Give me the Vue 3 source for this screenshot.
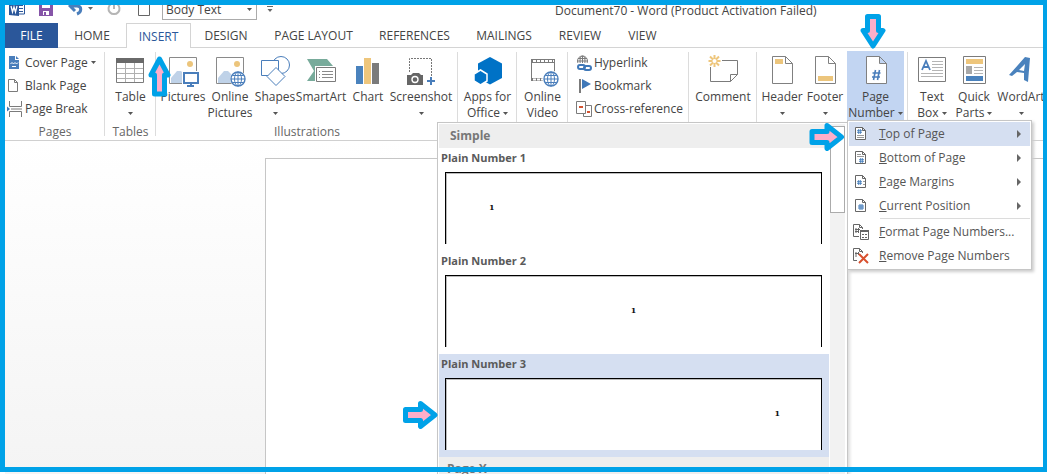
<script setup>
const tabs = [
  { label: 'FILE', cls: 'file' },
  { label: 'HOME', cls: 'home' },
  { label: 'INSERT', cls: 'insert' },
  { label: 'DESIGN', cls: 'mid' },
  { label: 'PAGE LAYOUT', cls: 'layout' },
  { label: 'REFERENCES', cls: 'refs' },
  { label: 'MAILINGS', cls: 'mail' },
  { label: 'REVIEW', cls: 'mid' },
  { label: 'VIEW', cls: 'view' },
]

const groups = [
  {
    name: 'Pages', cls: 'pages', small: [
      { icon: 'cover', label: 'Cover Page', caret: true },
      { icon: 'blank', label: 'Blank Page' },
      { icon: 'break', label: 'Page Break' },
    ],
  },
  { name: 'Tables', cls: 'tables', big: [{ icon: 'table', lines: ['Table'], caret: true, w: 'w50' }] },
  {
    name: 'Illustrations', cls: 'illus', big: [
      { icon: 'pictures', lines: ['Pictures'], w: 'w44' },
      { icon: 'online-pictures', lines: ['Online', 'Pictures'], w: 'w50' },
      { icon: 'shapes', lines: ['Shapes'], caret: true, w: 'w40' },
      { icon: 'smartart', lines: ['SmartArt'], w: 'w52' },
      { icon: 'chart', lines: ['Chart'], w: 'w42' },
      { icon: 'screenshot', lines: ['Screenshot'], caret: true, w: 'w64' },
    ],
  },
  { name: '', cls: 'apps', big: [{ icon: 'apps', lines: ['Apps for', 'Office'], caret: true, w: 'w52' }] },
  { name: '', cls: 'media', big: [{ icon: 'video', lines: ['Online', 'Video'], w: 'w50' }] },
  {
    name: '', cls: 'links', small: [
      { icon: 'link', label: 'Hyperlink' },
      { icon: 'bookmark', label: 'Bookmark' },
      { icon: 'xref', label: 'Cross-reference' },
    ],
  },
  { name: '', cls: 'comments', big: [{ icon: 'comment', lines: ['Comment'], w: 'w64' }] },
  {
    name: '', cls: 'hf', big: [
      { icon: 'header', lines: ['Header'], caret: true, w: 'w42' },
      { icon: 'footer', lines: ['Footer'], caret: true, w: 'w44' },
      { icon: 'number', lines: ['Page', 'Number'], caret: true, w: 'w57', on: true },
    ],
  },
  {
    name: '', cls: 'text', big: [
      { icon: 'textbox', lines: ['Text', 'Box'], caret: true, w: 'w40' },
      { icon: 'parts', lines: ['Quick', 'Parts'], caret: true, w: 'w44' },
      { icon: 'wordart', lines: ['WordArt'], caret: true, w: 'w50' },
    ],
  },
]

const menu = [
  { icon: 'm-top', key: 'T', rest: 'op of Page', sub: true, on: true },
  { icon: 'm-bottom', key: 'B', rest: 'ottom of Page', sub: true },
  { icon: 'm-margin', key: 'P', rest: 'age Margins', sub: true },
  { icon: 'm-current', key: 'C', rest: 'urrent Position', sub: true, last: true },
  { icon: 'm-format', key: 'F', rest: 'ormat Page Numbers...' },
  { icon: 'm-remove', key: 'R', rest: 'emove Page Numbers' },
]

const samples = [
  { label: 'Plain Number 1', pos: 'left' },
  { label: 'Plain Number 2', pos: 'center' },
  { label: 'Plain Number 3', pos: 'right', on: true },
]
</script>

<template>
  <div class="window">
    <svg class="defs" aria-hidden="true">
      <symbol id="cover" viewBox="0 0 16 16">
        <path d="M2 1h6v4h4v9H2z" fill="#4a7ebb" /><path d="M9 1l3 3H9z" fill="#4a7ebb" />
        <path d="M3.500 9l1.500-1.500L6.500 9 8 7.500 9.500 9 11 7.500M5 12l1-1 1 1 1-1 1 1" fill="none" stroke="#fff" />
      </symbol>
      <symbol id="blank" viewBox="0 0 16 16">
        <path d="M1.500 1.500h6l3 3v9h-9zM7.500 1.500v3h3" fill="#fff" stroke="#7b7b7b" />
      </symbol>
      <symbol id="break" viewBox="0 0 16 16">
        <path d="M2.500 0v5.500h12V0M2.500 16v-5.500h12V16M4 8h11" fill="none" stroke="#7b7b7b" />
        <path d="M0 5.500v5L3 8z" fill="#3f78b8" />
      </symbol>
      <symbol id="table" viewBox="0 0 32 32">
        <path d="M1.500 3.500h27v24h-27z" fill="#fff" stroke="#7b7b7b" />
        <path d="M1 3h28v5H1z" fill="#6a6a6a" />
        <path d="M2 13.500h26M2 18.500h26M2 23.500h26M10.500 8v19M19.500 8v19" stroke="#b0b0b0" fill="none" />
      </symbol>
      <symbol id="pic" viewBox="0 0 32 32">
        <path d="M2.500 2.500h27v26h-27z" fill="#fff" stroke="#8a8a8a" />
        <circle cx="23" cy="9" r="3" fill="#ecc57c" />
        <path d="M4 28V23l6-7h4l8 8v4z" fill="#bfd2e8" />
      </symbol>
      <symbol id="globe" viewBox="0 0 16 16">
        <circle cx="8" cy="8" r="7" fill="#fff" stroke="#4a7ebb" stroke-width="1.400" />
        <path d="M8 1v14M1 8h14M2.500 4.500h11M2.500 11.500h11" stroke="#4a7ebb" fill="none" />
        <ellipse cx="8" cy="8" rx="3.500" ry="7" fill="none" stroke="#4a7ebb" />
      </symbol>
      <symbol id="pictures" viewBox="0 0 32 32">
        <use href="#pic" width="32" height="32" />
        <path d="M15 16h17v16H15z" fill="#fff" />
        <path d="M17 18h14v10H17z" fill="#fff" stroke="#4a7ebb" stroke-width="2" />
        <path d="M24 28v3M20 31h7" stroke="#4a7ebb" stroke-width="2" />
      </symbol>
      <symbol id="online-pictures" viewBox="0 0 32 32">
        <use href="#pic" width="32" height="32" />
        <circle cx="24" cy="24" r="8" fill="#fff" />
        <use href="#globe" x="16" y="16" width="16" height="16" />
      </symbol>
      <symbol id="shapes" viewBox="0 0 32 32">
        <circle cx="22" cy="10" r="8.500" fill="#fff" stroke="#4a7ebb" />
        <path d="M2.500 5.500h17v15h-17z" fill="#fff" stroke="#4a7ebb" />
        <path d="M17 12.500l9 9-9 9-9-9z" fill="#fff" stroke="#4a7ebb" />
      </symbol>
      <symbol id="smartart" viewBox="0 0 32 32">
        <path d="M2 4h20l6 7H12v15H2l7-10z" fill="#78ab9b" />
        <path d="M10 11h21v17H10z" fill="#fff" />
        <path d="M11.500 12.500h19v14h-19z" fill="#fff" stroke="#7b7b7b" />
        <path d="M17 16.500h11M17 19.500h11M17 22.500h11M14 16.500h1M14 19.500h1M14 22.500h1" stroke="#8a8a8a" fill="none" />
      </symbol>
      <symbol id="chart" viewBox="0 0 32 32">
        <path d="M4 11h7v18H4z" fill="#4a82bd" /><path d="M12 3h7v26h-7z" fill="#eec67c" /><path d="M20 8h7v21h-7z" fill="#7b7b7b" />
      </symbol>
      <symbol id="screenshot" viewBox="0 0 32 32">
        <path d="M4.500 17V3.500h22V21" fill="none" stroke="#777" stroke-dasharray="2 1" />
        <path d="M2 20h4l2-2h6l2 2h2v10H2z" fill="#666" />
        <circle cx="10" cy="24.500" r="3" fill="none" stroke="#fff" stroke-width="1.400" />
        <path d="M26 22v8M22 26h8" stroke="#4a7ebb" stroke-width="2" />
      </symbol>
      <symbol id="apps" viewBox="0 0 32 32">
        <path d="M18 2l12 6.500v14.500L18 29.500 6 23V8.500z" fill="#0072c6" />
        <path d="M8.500 15l6.500 4v7l-6.500 4-6.500-4v-7z" fill="#0072c6" stroke="#fff" stroke-width="1.500" />
      </symbol>
      <symbol id="video" viewBox="0 0 32 32">
        <path d="M4.500 4.500h23v21h-23z" fill="#fff" stroke="#7b7b7b" />
        <path d="M4 4h24v4H4zM4 23h24v3H4z" fill="#7b7b7b" />
        <path d="M6 6h21M6 24.500h12" stroke="#fff" stroke-width="2" stroke-dasharray="3 1" />
        <circle cx="24" cy="24" r="8.500" fill="#fff" />
        <use href="#globe" x="16" y="16" width="16" height="16" />
      </symbol>
      <symbol id="link" viewBox="0 0 16 16">
        <circle cx="6.500" cy="6" r="5" fill="none" stroke="#7b7b7b" />
        <path d="M1.500 6h10M2 3.500h9M6.500 1v10" stroke="#7b7b7b" fill="none" />
        <ellipse cx="6.500" cy="6" rx="2.500" ry="5" fill="none" stroke="#7b7b7b" />
        <path d="M1 8h15v8H1z" fill="#fff" />
        <rect x="2" y="10" width="7" height="4" rx="2" fill="none" stroke="#3f78b8" stroke-width="2" />
        <rect x="8" y="11" width="7" height="4" rx="2" fill="none" stroke="#3f78b8" stroke-width="2" />
      </symbol>
      <symbol id="bookmark" viewBox="0 0 16 16">
        <path d="M4 1v14" stroke="#7b7b7b" stroke-width="2" /><path d="M6 1l9 5-9 5z" fill="#3f78b8" />
      </symbol>
      <symbol id="xref" viewBox="0 0 16 16">
        <path d="M7.500 4.500h8v11h-8z" fill="#fff" stroke="#7b7b7b" />
        <path d="M.5.5h9v12h-9z" fill="#fff" stroke="#7b7b7b" />
        <path d="M3 5h4v2H3zM11 10h3v2h-3z" fill="#d35230" />
      </symbol>
      <symbol id="comment" viewBox="0 0 32 32">
        <path d="M3.500 12v14.500h20l7-7v-14H15M23.500 26.500v-7h7" fill="none" stroke="#7b7b7b" />
        <path d="M7.500 0v12M1.500 6h12M3 1.500l9 9M12 1.500l-9 9" stroke="#eec67c" stroke-width="2" />
        <circle cx="7.500" cy="6" r="2" fill="#fff" />
      </symbol>
      <symbol id="sheet" viewBox="0 0 32 32">
        <path d="M6.500 1.500h13l7 7v20h-20zM19.500 1.500v7h7" fill="#fff" stroke="#808080" />
      </symbol>
      <symbol id="header" viewBox="0 0 32 32">
        <use href="#sheet" width="32" height="32" /><path d="M9 4h8v5H9z" fill="#ecc57c" />
      </symbol>
      <symbol id="footer" viewBox="0 0 32 32">
        <use href="#sheet" width="32" height="32" /><path d="M9 21h15v5H9z" fill="#ecc57c" />
      </symbol>
      <symbol id="number" viewBox="0 0 32 32">
        <use href="#sheet" width="32" height="32" />
        <path d="M15.500 15l-2 10M19.500 15l-2 10M12.500 18h8M12 22h8" stroke="#4a7ebb" stroke-width="1.600" fill="none" />
      </symbol>
      <symbol id="textbox" viewBox="0 0 32 32">
        <path d="M2.500 2.500h27v24h-27z" fill="#fff" stroke="#7b7b7b" />
        <path d="M6 15l4-9 4 9M7.500 12h5" stroke="#4a7ebb" stroke-width="1.800" fill="none" />
        <path d="M16 6.500h11M16 9.500h11M16 12.500h11M16 15.500h11M5 18.500h22M5 21.500h22" stroke="#b5b5b5" />
      </symbol>
      <symbol id="parts" viewBox="0 0 32 32">
        <path d="M5.500 1.500h22v27h-22z" fill="#fff" stroke="#7b7b7b" />
        <path d="M8 4h17v5H8z" fill="#eec67c" /><path d="M8 11h6v8H8z" fill="#a8a8a8" /><path d="M8 21h17v5H8z" fill="#4a82bd" />
        <path d="M16 12.500h9M16 15.500h9M16 18.500h9" stroke="#b5b5b5" />
      </symbol>
      <symbol id="wordart" viewBox="0 0 32 32">
        <path d="M4 20l3 1 5-4 7 1v7l4 2 2-24-5-1z M14 15l6-6-1 7z" fill="#4a82bd" fill-rule="evenodd" />
      </symbol>
      <symbol id="m-sheet" viewBox="0 0 16 16">
        <path d="M2.500 1.500h7l3 3v9h-10zM9.500 1.500v3h3" fill="#fff" stroke="#666" />
      </symbol>
      <symbol id="hash" viewBox="0 0 6 6">
        <path d="M2 0v6M4 0v6M0 2h6M0 4h6" stroke="#3f78b8" fill="none" />
      </symbol>
      <symbol id="m-top" viewBox="0 0 16 16">
        <use href="#m-sheet" width="16" height="16" /><use href="#hash" x="4" y="3" width="5" height="5" />
        <path d="M4 9.500h7M4 11.500h7" stroke="#999" />
      </symbol>
      <symbol id="m-bottom" viewBox="0 0 16 16">
        <use href="#m-sheet" width="16" height="16" /><use href="#hash" x="6" y="8" width="5" height="5" />
        <path d="M4 4.500h4M4 6.500h7" stroke="#999" />
      </symbol>
      <symbol id="m-margin" viewBox="0 0 16 16">
        <use href="#m-sheet" width="16" height="16" /><use href="#hash" x="4" y="6" width="5" height="5" />
        <path d="M10 7.500h2M10 10.500h2" stroke="#999" />
      </symbol>
      <symbol id="m-current" viewBox="0 0 16 16">
        <use href="#m-sheet" width="16" height="16" /><use href="#hash" x="5" y="6" width="6" height="6" />
      </symbol>
      <symbol id="m-format" viewBox="0 0 16 16">
        <path d="M6 12.500H.5V.5h6l3 3V5M6.500.5v3h3M3 4v5M5.500 4v5M2 5.500h5M2 7.500h4" fill="none" stroke="#666" />
        <path d="M7.500 6.500h8v9h-8z" fill="#fff" stroke="#666" /><path d="M7 6h9v2H7z" fill="#666" />
        <path d="M9 10.500h2M12 10.500h2M9 13.500h2M12 13.500h2" stroke="#666" />
      </symbol>
      <symbol id="m-remove" viewBox="0 0 16 16">
        <path d="M4 12.500H.5V.5h6l3 3V5M6.500.5v3h3M3 4v5M5.500 4v3M2 5.500h4" fill="none" stroke="#666" />
        <path d="M6 6l9 9M15 6l-9 9" stroke="#d8502e" stroke-width="2" fill="none" />
      </symbol>
      <symbol id="caret" viewBox="0 0 5 3"><path d="M0 0h5L2.500 3z" fill="#555" /></symbol>
      <symbol id="arrow" viewBox="0 0 36 28">
        <path d="M2.500 8.500h15V2.500L32 14 17.500 25.500v-6h-15z" fill="#ffaec9" stroke="#00a2e8" stroke-width="5" stroke-linejoin="round" />
      </symbol>
    </svg>

    <header class="titlebar">
      <div class="quick">
        <svg class="logo" viewBox="0 0 16 16" aria-hidden="true">
          <path d="M8 2h7.500v12H8z" fill="#fff" stroke="#2b579a" /><path d="M10 5.500h4M10 8.500h4M10 11.500h4" stroke="#2b579a" />
          <path d="M0 1l10-1v16L0 15z" fill="#2b579a" /><path d="M2 6l1.500 6L5 7l1.500 5L8 6" fill="none" stroke="#fff" stroke-width="1.300" />
        </svg>
        <button class="tool save" aria-label="Save">
          <svg viewBox="0 0 14 16"><path d="M0 1h14v15H0z" fill="#8655a8" /><path d="M3 1h8v7H3zM4 11h6v4H4z" fill="#fff" /><path d="M5 12h2v3H5z" fill="#8655a8" /></svg>
        </button>
        <button class="tool undo" aria-label="Undo">
          <svg viewBox="0 0 26 16"><path d="M2 6h7c5 0 5 6 0 8M7 1L2 6l5 5" fill="none" stroke="#4a7ebb" stroke-width="3" /><path d="M20 7h5l-2.500 3z" fill="#666" /></svg>
        </button>
        <button class="tool redo" aria-label="Repeat">
          <svg viewBox="0 0 14 16"><path d="M4 4a5.500 5.500 0 1 0 6 0M7 9V4h4" fill="none" stroke="#b5b5b5" stroke-width="2" /></svg>
        </button>
        <button class="tool new" aria-label="New">
          <svg viewBox="0 0 12 16"><path d="M.5.500h7l4 4v11H.5zM7.500.500v4h4" fill="#fff" stroke="#666" /></svg>
        </button>
        <div class="combo">
          <select aria-label="Style"><option>Body Text</option></select>
          <svg class="caret" aria-hidden="true"><use href="#caret" /></svg>
        </div>
        <button class="tool more" aria-label="Customize Quick Access Toolbar">
          <svg viewBox="0 0 6 7"><path d="M0 .5h6" stroke="#666" /><path d="M.5 3h5L3 6z" fill="#666" /></svg>
        </button>
      </div>
      <h1>Document70 - Word (Product Activation Failed)</h1>
    </header>

    <nav class="tabs">
      <button v-for="t in tabs" :key="t.label" :class="t.cls">{{ t.label }}</button>
    </nav>

    <section class="ribbon">
      <div v-for="g in groups" :key="g.cls" class="group" :class="g.cls">
        <div v-if="g.small" class="stack">
          <button v-for="b in g.small" :key="b.label" class="small">
            <svg class="i16" aria-hidden="true"><use :href="'#' + b.icon" /></svg>
            <span>{{ b.label }}</span>
            <svg v-if="b.caret" class="caret" aria-hidden="true"><use href="#caret" /></svg>
          </button>
        </div>
        <div v-else class="row">
          <button v-for="b in g.big" :key="b.icon" class="big" :class="[b.w, { on: b.on }]">
            <svg class="i32" aria-hidden="true"><use :href="'#' + b.icon" /></svg>
            <span class="line">{{ b.lines[0] }}</span>
            <span class="line">{{ b.lines[1] }}<svg v-if="b.caret" class="caret" aria-hidden="true"><use href="#caret" /></svg></span>
          </button>
        </div>
        <div class="name">{{ g.name }}</div>
      </div>
    </section>

    <main class="canvas"><div class="paper"></div></main>

    <section class="gallery">
      <div class="list">
        <h2>Simple</h2>
        <button v-for="s in samples" :key="s.label" class="sample" :class="{ on: s.on }">
          <span class="caption">{{ s.label }}</span>
          <span class="preview" :class="s.pos"><span>1</span></span>
        </button>
        <h2 class="next">Page X</h2>
      </div>
      <div class="scroll"><div class="thumb"></div></div>
    </section>

    <div class="menu" role="menu">
      <button v-for="m in menu" :key="m.icon" role="menuitem" :class="{ on: m.on, last: m.last }">
        <svg class="i16" aria-hidden="true"><use :href="'#' + m.icon" /></svg>
        <span class="label"><u>{{ m.key }}</u>{{ m.rest }}</span>
        <svg v-if="m.sub" class="sub" viewBox="0 0 4 8" aria-hidden="true"><path d="M0 0l4 4-4 4z" fill="#666" /></svg>
      </button>
    </div>

    <svg class="mark up" viewBox="0 0 23 42" aria-hidden="true">
      <path d="M6.500 39V20H3L11.500 4 20 20h-3.500v19z" fill="#ffaec9" stroke="#00a2e8" stroke-width="5" stroke-linejoin="round" />
    </svg>
    <svg class="mark down" viewBox="0 0 26 36" aria-hidden="true">
      <path d="M7.500 2.500v14H3L13 32l10-15.500h-4.500v-14z" fill="#ffaec9" stroke="#00a2e8" stroke-width="5" stroke-linejoin="round" />
    </svg>
    <svg class="mark first" aria-hidden="true"><use href="#arrow" /></svg>
    <svg class="mark second" aria-hidden="true"><use href="#arrow" /></svg>
    <div class="frame"></div>
  </div>
</template>

<style>
body { margin: 0; background: #fff; }
</style>

<style scoped>
* { box-sizing: border-box; }
.window {
  position: relative;
  display: flex;
  flex-direction: column;
  height: 100vh;
  overflow: hidden;
  padding-left: 5px;
  color: #444;
  font: 12px/16px "Open Sans", "Noto Sans", sans-serif;
}
button { padding: 0; border: 0; background: none; color: inherit; font: inherit; white-space: nowrap; }
svg { display: block; flex: none; }
.defs { position: absolute; width: 0; height: 0; }
.i16 { width: 16px; height: 16px; }
.i32 { width: 32px; height: 32px; }
.caret { width: 5px; height: 3px; }

.titlebar { display: flex; height: 23px; flex: none; }
.quick { display: flex; align-items: flex-start; width: 550px; padding-left: 4px; }
.logo { width: 16px; height: 16px; margin-right: 14px; }
.tool svg { width: 100%; height: 16px; }
.save { width: 14px; margin-right: 15px; }
.undo { width: 26px; margin-right: 13px; }
.redo { width: 14px; margin-right: 17px; }
.new { width: 12px; margin-right: 12px; }
.combo { position: relative; width: 95px; height: 20px; margin-right: 10px; }
.combo select {
  appearance: none; width: 100%; height: 20px; padding: 0 3px;
  border: 1px solid #ababab; border-radius: 0; background: #fff; color: #444; font: inherit;
}
.combo .caret { position: absolute; right: 5px; top: 8px; }
.more { width: 6px; padding-top: 6px; }
.more svg { height: 7px; }
h1 { margin: 0; padding-top: 3px; font: inherit; white-space: nowrap; }

.tabs { display: flex; height: 25px; flex: none; border-bottom: 1px solid #d4d4d4; }
.tabs button { height: 25px; padding-top: 1px; text-align: center; }
.tabs .file { width: 53px; background: #2b579a; color: #fff; }
.tabs .home { width: 68px; }
.tabs .insert { width: 65px; border: 1px solid #d4d4d4; border-bottom: 0; background: #fff; color: #2b579a; }
.tabs .mid { width: 70px; }
.tabs .layout { width: 105px; }
.tabs .refs { width: 97px; }
.tabs .mail { width: 82px; }
.tabs .view { width: 55px; }

.ribbon { display: flex; height: 93px; flex: none; border-bottom: 1px solid #d0d0d0; overflow: hidden; }
.group { display: flex; flex-direction: column; flex: none; align-items: center; position: relative; padding-top: 3px; }
.group::after { content: ""; position: absolute; right: 0; top: 4px; bottom: 4px; width: 1px; background: #dcdcdc; }
.group.text::after { display: none; }
.pages { width: 100px; }
.tables { width: 51px; }
.illus { width: 302px; }
.apps { width: 59px; }
.media { width: 51px; }
.links { width: 121px; }
.comments { width: 68px; }
.hf { width: 151px; }
.text { width: 142px; }
.row { display: flex; height: 73px; }
.big { display: flex; flex-direction: column; align-items: center; padding-top: 4px; }
.big.on { background: #c2d5f2; }
.big .i32 { margin-bottom: 2px; }
.line { display: flex; align-items: center; justify-content: center; gap: 3px; height: 16px; }
.w40 { width: 40px; } .w42 { width: 42px; } .w44 { width: 44px; } .w50 { width: 50px; }
.w52 { width: 52px; } .w57 { width: 57px; } .w64 { width: 64px; }
.stack { display: flex; flex-direction: column; align-self: flex-start; height: 73px; padding: 0 2px; }
.links .stack { padding: 0 8px; }
.small { display: flex; align-items: center; gap: 2px; height: 23px; }
.small .caret { margin-left: 1px; }
.name { height: 16px; color: #666; }

.canvas { flex: 1; padding: 17px 0 0 260px; background: linear-gradient(#fff, #f4f4f4); }
.paper { height: 100%; border: 1px solid #c6c6c6; border-width: 1px 0 0 1px; background: #fff; }

.gallery {
  position: absolute; left: 437px; top: 122px; bottom: 0; width: 411px;
  display: flex; padding: 1px 2px 0 1px; border: 1px solid #c6c6c6; border-bottom: 0;
  background: #fff; box-shadow: 2px 2px 3px #ddd; color: #5a5a5a; overflow: hidden;
}
.list { flex: 1; }
h2 { height: 24px; margin: 0; padding: 4px 11px; background: #eee; color: #777; font: bold 12px/16px "Open Sans", sans-serif; }
h2.next { padding: 4px 8px; }
.sample { display: flex; flex-direction: column; width: 100%; height: 103px; text-align: left; }
.sample.on { background: #d5dff1; }
.caption { padding: 2px 2px 6px; font-size: 11px; font-weight: bold; }
.preview {
  display: flex; align-self: stretch; height: 72px; margin: 0 7px 0 6px; padding-top: 28px;
  border: 1px solid #000; border-bottom: 0; background: #fff;
  box-shadow: inset 1px 1px #bbb; color: #111; font: bold 8px/12px "DejaVu Serif", serif;
}
.preview.left { padding-left: 43px; }
.preview.center { justify-content: center; }
.preview.right { justify-content: flex-end; padding-right: 41px; }
.scroll { width: 15px; margin-left: 1px; background: #f2f2f2; }
.thumb { height: 87px; margin-top: 2px; border: 1px solid #ababab; background: #fff; }

.menu {
  position: absolute; left: 847px; top: 120px; width: 185px; padding: 1px;
  border: 1px solid #c6c6c6; background: #fff; box-shadow: 2px 2px 3px #ccc; color: #555;
}
.menu button { position: relative; display: flex; align-items: center; width: 100%; height: 24px; padding: 0 9px 0 4px; text-align: left; }
.menu button.on { background: #d5dff1; }
.menu button.last { margin-bottom: 2px; }
.menu button.last::after { content: ""; position: absolute; left: 31px; right: 0; bottom: -1px; height: 1px; background: #dcdcdc; }
.menu .label { flex: 1; padding-left: 10px; }
.sub { width: 4px; height: 8px; }

.mark { position: absolute; }
.up { left: 148px; top: 55px; width: 23px; height: 42px; }
.down { left: 860px; top: 14px; width: 26px; height: 36px; }
.first { left: 809px; top: 123px; width: 37px; height: 28px; }
.second { left: 403px; top: 401px; width: 36px; height: 28px; }
.frame { position: absolute; inset: 0 0 2px; border: 5px solid #00a2e8; border-right-width: 4px; pointer-events: none; }
</style>
